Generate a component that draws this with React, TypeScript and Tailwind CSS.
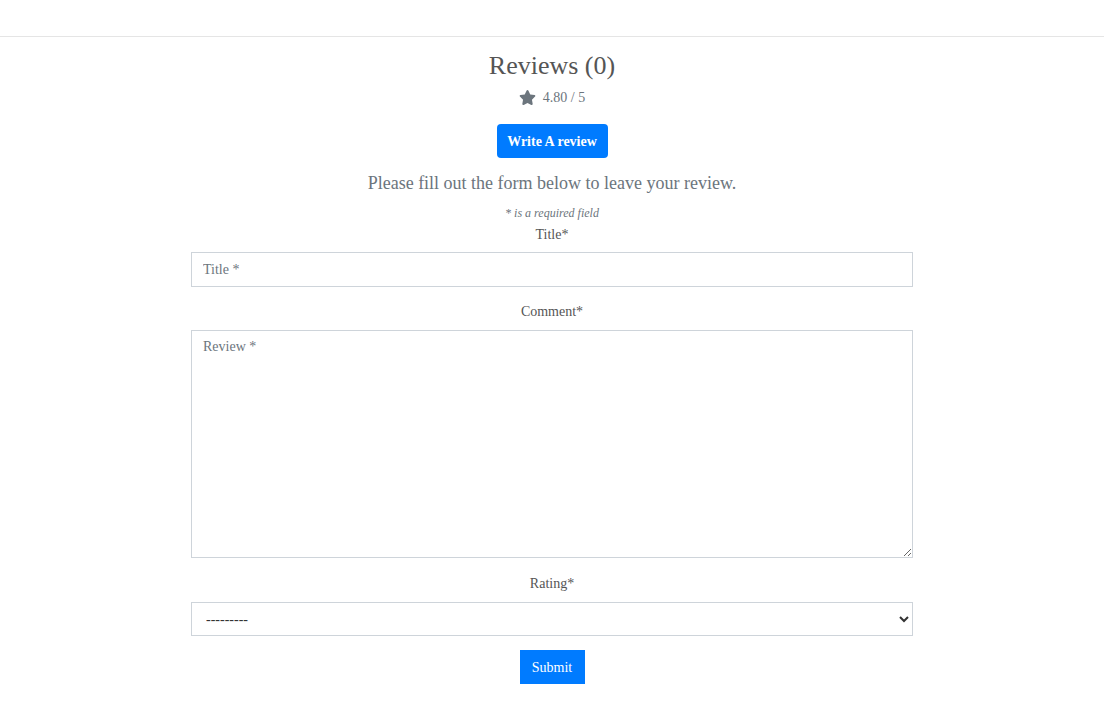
import React from "react";

const Star = () => (
  <svg viewBox="0 0 576 512" className="h-[15px] w-[17px] fill-[#6c757d]">
    <path d="M259.3 17.8L194 150.2 47.9 171.5c-26.2 3.8-36.7 36.1-17.7 54.6l105.7 103-25 145.5c-4.5 26.3 23.2 46 46.4 33.7L288 439.6l130.7 68.7c23.2 12.2 50.9-7.4 46.4-33.7l-25-145.5 105.7-103c19-18.5 8.5-50.8-17.7-54.6L382 150.2 316.7 17.8c-11.7-23.6-45.6-23.9-57.4 0z" />
  </svg>
);

const App = () => {
  return (
    <div className="min-h-[715px] bg-white font-['Liberation_Serif',serif] text-[#6c757d]">
      <div className="h-[37px] border-b border-[#e5e5e5]" />

      <div className="mx-auto flex w-[722px] flex-col items-center">
        <h2 className="mt-[13px] text-[26px] leading-[31px] text-[#555]">
          Reviews (0)
        </h2>

        <div className="mt-[6px] flex h-[20px] items-center text-[14px]">
          <Star />
          <span className="ml-[7px]">4.80 / 5</span>
        </div>

        <button className="mt-[17px] h-[34px] w-[111px] rounded-[4px] bg-[#007bff] text-[14px] font-bold text-white">
          Write A review
        </button>

        <p className="mt-[12px] text-[18px] leading-[26px]">
          Please fill out the form below to leave your review.
        </p>

        <p className="mt-[9px] text-[12px] italic leading-[16px]">
          * is a required field
        </p>

        <label className="mt-[4px] text-[14px] leading-[20px] text-[#555]">
          Title*
        </label>
        <input
          className="mt-[7px] h-[35px] w-full border border-[#ced4da] px-[11px] text-[14px] outline-none placeholder:text-[#6c757d]"
          placeholder="Title *"
        />

        <label className="mt-[15px] text-[14px] leading-[20px] text-[#555]">
          Comment*
        </label>
        <textarea
          className="mt-[8px] h-[228px] w-full border border-[#ced4da] px-[11px] py-[5px] text-[14px] outline-none placeholder:text-[#6c757d]"
          placeholder="Review *"
        />

        <label className="mt-[16px] text-[14px] leading-[20px] text-[#555]">
          Rating*
        </label>
        <select className="mt-[8px] h-[34px] w-full border border-[#ced4da] bg-white px-[10px] text-[14px] text-[#333] outline-none">
          <option>---------</option>
        </select>

        <button className="mt-[14px] h-[34px] w-[65px] bg-[#007bff] text-[14px] text-white">
          Submit
        </button>
      </div>
    </div>
  );
};

export default App;
